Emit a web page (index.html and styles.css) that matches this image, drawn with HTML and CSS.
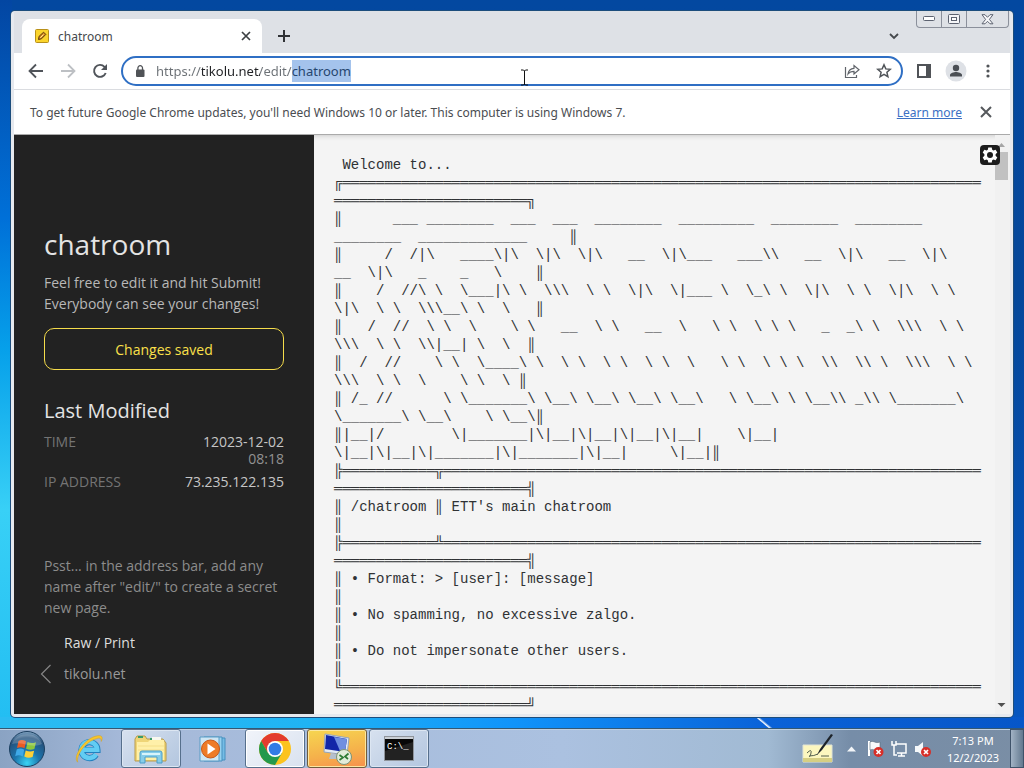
FILE: index.html
```html
<!DOCTYPE html>
<html lang="en">
<head>
<meta charset="utf-8">
<title>chatroom</title>
<link rel="stylesheet" href="styles.css">
</head>
<body>
<main class="desktop">
  <section class="window">
    <header class="tabstrip">
      <div class="tab">
        <svg class="favicon" width="14" height="14" viewBox="0 0 14 14"><rect x=".5" y=".5" width="13" height="13" rx="1" fill="#fbd42c" stroke="#b8901a"/><path d="M3.500 10.500l.6-3.200 4.500-4.100 2.200 2.200-4.300 4.400z" fill="#d9881c" stroke="#5a3a10"/><path d="M5.300 8.700l3.200-3.100" stroke="#fff0a0"/></svg>
        <span class="tab-title">chatroom</span>
        <button class="icon-button tab-close" aria-label="Close tab"><svg width="10" height="10" viewBox="0 0 10 10"><path d="M1 1l8 8M9 1l-8 8" stroke="#3c4043" stroke-width="1.700"/></svg></button>
      </div>
      <button class="icon-button new-tab" aria-label="New tab"><svg width="12" height="12" viewBox="0 0 12 12"><path d="M6 0v12M0 6h12" stroke="#303236" stroke-width="2"/></svg></button>
      <span class="grow"></span>
      <button class="icon-button tab-search" aria-label="Search tabs"><svg width="10" height="7" viewBox="0 0 10 7"><path d="M1 1l4 4 4-4" fill="none" stroke="#45484c" stroke-width="1.800"/></svg></button>
      <div class="caption">
        <button aria-label="Minimize"><svg width="12" height="6" viewBox="0 0 12 6"><rect x=".5" y=".5" width="11" height="4" rx="1" fill="#fff" stroke="#5c6270"/></svg></button>
        <button aria-label="Maximize"><svg width="12" height="11" viewBox="0 0 12 11"><rect x=".5" y=".5" width="11" height="9" rx="1" fill="#f4f5f8" stroke="#5c6270"/><rect x="3.500" y="3.500" width="5" height="3" fill="#fff" stroke="#5c6270"/></svg></button>
        <button class="caption-close" aria-label="Close"><svg width="13" height="11" viewBox="0 0 13 11"><path d="M1 .7h3l2.500 2.600L9 .7h3L8.400 5.400l3.600 4.400H9L6.500 7.300 4 9.800H1l3.600-4.400z" fill="#f8f8fa" stroke="#5c6270"/></svg></button>
      </div>
    </header>

    <nav class="toolbar">
      <button class="icon-button" aria-label="Back"><svg width="16" height="16" viewBox="0 0 16 16" fill="none" stroke="#50545a" stroke-width="1.800"><path d="M15 8H2M8 1.500L1.500 8 8 14.500"/></svg></button>
      <button class="icon-button" aria-label="Forward"><svg width="16" height="16" viewBox="0 0 16 16" fill="none" stroke="#bdc0c4" stroke-width="1.800"><path d="M1 8h13M8 1.500L14.500 8 8 14.500"/></svg></button>
      <button class="icon-button" aria-label="Reload"><svg width="16" height="16" viewBox="0 0 16 16"><path d="M13.700 10a6 6 0 1 1-1.200-6.200L14 5.500" fill="none" stroke="#50545a" stroke-width="1.900"/><path d="M15 1v6H9z" fill="#50545a"/></svg></button>
      <div class="omnibox">
        <svg width="10" height="13" viewBox="0 0 10 13"><rect x="1" y="4.500" width="8.500" height="7.500" rx="1" fill="#505357"/><path d="M2.900 5V3a2.300 2.300 0 0 1 4.600 0v2" fill="none" stroke="#505357" stroke-width="1.300"/></svg>
        <input class="url" type="text" aria-label="Address" value="https://tikolu.net/edit/chatroom" spellcheck="false">
        <button class="icon-button" aria-label="Share"><svg width="16" height="16" viewBox="0 0 16 16" fill="none" stroke="#60646a" stroke-width="1.200"><path d="M1.500 4v10.500h11V12"/><path d="M4 11c.5-4 3-5.500 6-5.700V2.500L15 6.700 10 11V8.300C7.500 8.300 5.500 9 4 11z"/></svg></button>
        <button class="icon-button" aria-label="Bookmark"><svg width="16" height="16" viewBox="0 0 16 16"><path d="M8 1.800l1.800 4.100 4.500.4-3.400 3 1 4.400L8 11.400l-3.900 2.300 1-4.400-3.400-3 4.500-.4z" fill="none" stroke="#505459" stroke-width="1.500"/></svg></button>
        <svg class="ibeam" width="9" height="17" viewBox="0 0 9 17"><path d="M1 1h2.500l1 1 1-1H8M4.500 2v14M1 16h2.500l1-1 1 1H8" fill="none" stroke="#111"/></svg>
      </div>
      <button class="icon-button" aria-label="Side panel"><svg width="14" height="14" viewBox="0 0 14 14"><rect x="1" y="1" width="12" height="12" fill="#fff" stroke="#505357" stroke-width="2"/><rect x="9" y="1" width="4" height="12" fill="#505357"/></svg></button>
      <button class="icon-button" aria-label="Profile"><svg width="22" height="22" viewBox="0 0 22 22"><circle cx="11" cy="11" r="10.500" fill="#dee1e6"/><circle cx="11" cy="8" r="3.200" fill="#4a4e54"/><path d="M5 16.500v-1.500c0-2 4-3 6-3s6 1 6 3v1.500z" fill="#4a4e54"/></svg></button>
      <button class="icon-button" aria-label="Menu"><svg width="4" height="14" viewBox="0 0 4 14" fill="#505357"><circle cx="2" cy="2" r="1.600"/><circle cx="2" cy="7" r="1.600"/><circle cx="2" cy="12" r="1.600"/></svg></button>
    </nav>

    <div class="infobar">
      <span class="infobar-text">To get future Google Chrome updates, you'll need Windows 10 or later. This computer is using Windows 7.</span>
      <a href="#learn">Learn more</a>
      <button class="icon-button infobar-close" aria-label="Dismiss"><svg width="12" height="12" viewBox="0 0 12 12"><path d="M1 1l10 10M11 1L1 11" stroke="#55585c" stroke-width="2"/></svg></button>
    </div>

    <div class="page">
      <aside class="sidebar">
        <h1>chatroom</h1>
        <p class="intro">Feel free to edit it and hit Submit!<br>Everybody can see your changes!</p>
        <button class="submit">Changes saved</button>
        <h2>Last Modified</h2>
        <dl class="meta">
          <dt>TIME</dt><dd>12023-12-02<span class="hour">08:18</span></dd>
          <dt>IP ADDRESS</dt><dd>73.235.122.135</dd>
        </dl>
        <p class="hint">Psst... in the address bar, add any name after "edit/" to create a secret new page.</p>
        <a class="raw" href="#raw">Raw / Print</a>
        <a class="home" href="#home"><svg width="12" height="20" viewBox="0 0 12 20"><path d="M10.500 1L1.500 10l9 9" fill="none" stroke="#858585" stroke-width="1.200"/></svg>tikolu.net</a>
      </aside>
      <div class="editor">
        <textarea class="note" aria-label="Note" wrap="off" spellcheck="false">
 Welcome to...
╔════════════════════════════════════════════════════════════════════════════
═══════════════════════╗
║      ___ ________  ___  ___  ________  _________  ________  ________
________  _____________     ║
║     /  /|\   ____\|\  \|\  \|\   __  \|\___   ___\\   __  \|\   __  \|\
__  \|\   _    _   \    ║
║    /  //\ \  \___|\ \  \\\  \ \  \|\  \|___ \  \_\ \  \|\  \ \  \|\  \ \
\|\  \ \  \\\__\ \  \   ║
║   /  //  \ \  \    \ \   __  \ \   __  \   \ \  \ \ \   _  _\ \  \\\  \ \
\\\  \ \  \\|__| \  \  ║
║  /  //    \ \  \____\ \  \ \  \ \  \ \  \   \ \  \ \ \  \\  \\ \  \\\  \ \
\\\  \ \  \    \ \  \ ║
║ /_ //      \ \_______\ \__\ \__\ \__\ \__\   \ \__\ \ \__\\ _\\ \_______\
\_______\ \__\    \ \__\║
║|__|/        \|_______|\|__|\|__|\|__|\|__|    \|__|
\|__|\|__|\|_______|\|_______|\|__|     \|__|║
╠═══════════╦════════════════════════════════════════════════════════════════
═══════════════════════╣
║ /chatroom ║ ETT's main chatroom
║
╠═══════════╩════════════════════════════════════════════════════════════════
═══════════════════════╣
║ • Format: &gt; [user]: [message]
║
║ • No spamming, no excessive zalgo.
║
║ • Do not impersonate other users.
║
╚════════════════════════════════════════════════════════════════════════════
═══════════════════════╝</textarea>
        <div class="scrollbar"><svg width="13" height="14" viewBox="0 0 13 14"><path d="M3 9l3.500-4L10 9z" fill="#a5a5a5"/></svg><span class="thumb"></span><span class="grow"></span><svg width="13" height="18" viewBox="0 0 13 18"><path d="M2.500 7h8l-4 4z" fill="#505050"/></svg></div>
        <button class="settings" aria-label="Settings"><svg width="20" height="20" viewBox="0 0 20 20"><rect width="20" height="20" rx="4" fill="#1c1c1c"/><path d="M8.300 2.500h3.400l.5 2.200 1.200.7 2.200-.7 1.700 2.900-1.700 1.600v1.600l1.700 1.600-1.700 2.900-2.200-.7-1.200.7-.5 2.200H8.300l-.5-2.200-1.200-.7-2.200.7-1.700-2.900 1.700-1.600V9.200L2.700 7.600l1.700-2.900 2.200.7 1.200-.7z" fill="#fff"/><circle cx="10" cy="10" r="3" fill="#1c1c1c"/></svg></button>
      </div>
    </div>
  </section>
</main>

<footer class="taskbar">
  <button class="start" aria-label="Start"><svg width="38" height="38" viewBox="0 0 38 38"><defs><radialGradient id="orb" cx=".5" cy=".9" r=".9"><stop offset="0" stop-color="#39d4f4"/><stop offset=".4" stop-color="#1b75ad"/><stop offset=".8" stop-color="#24517c"/><stop offset="1" stop-color="#87a9c6"/></radialGradient></defs><circle cx="19" cy="19" r="17.500" fill="url(#orb)" stroke="#1b3f60"/><path d="M10.500 11c2.500-1.500 5-1.200 7.500.3l-1.500 7c-2.500-1.500-5-1.500-7.500-.2z" fill="#ea5a23"/><path d="M19.500 12c3 1.500 5.500 1.400 8.500.2l-1.600 6.800c-3 1.200-5.500 1-8.300-.3z" fill="#8cc63e"/><path d="M8.700 19.500c2.500-1.300 5-1.200 7.500.3l-1.500 6.700c-2.500-1.500-5-1.500-7.500-.3z" fill="#3fa9e8"/><path d="M17.700 20.500c3 1.400 5.500 1.400 8.400.3L24.600 27c-3 1.200-5.500 1-8.300-.4z" fill="#fdd037"/><path d="M4 14C8 1 30 1 34 14 24 19 14 11 4 14z" fill="#fff" opacity=".2"/></svg></button>
  <button class="task" aria-label="Internet Explorer"><svg width="32" height="32" viewBox="0 0 34 34"><path d="M24.500 23A8.500 8.500 0 1 1 26 18H11" fill="none" stroke="#2180bf" stroke-width="6.500"/><path d="M24.500 22.500A8.500 8.500 0 1 1 25.800 17.800H11" fill="none" stroke="#62ccf3" stroke-width="4.800"/><path d="M5 31C-1 26 12 5 26 3c5-1 6 2 4 6 0-4-2-4-5-3C13 9 3 24 5 31z" fill="#f7c62e" stroke="#d59c18" stroke-width=".5"/></svg></button>
  <button class="task open" aria-label="Windows Explorer"><svg width="34" height="32" viewBox="0 0 34 32"><path d="M1 28V6l2-3h8l2 3h16l3 4v18z" fill="#efd577" stroke="#b99b4c"/><path d="M4 4h5M16 6h8" stroke="#3a9b68" stroke-width="2"/><path d="M18 4h9v4h-9z" fill="#f8f8f0"/><path d="M3 9h11l2-2h14v20H3z" fill="#fff0a9"/><path d="M4 13h26M4 17h26" stroke="#f4df8a"/><path d="M6 30V20q0-2 2-2h18q2 0 2 2v10h-5v-6H11v6z" fill="#86cde9" stroke="#4a9dc9"/><path d="M8 21h18" stroke="#d8f4fb" stroke-width="2"/></svg></button>
  <button class="task" aria-label="Media Player"><svg width="28" height="26" viewBox="0 0 28 26"><path d="M9 2h17v22H9z" fill="#75bce5" stroke="#4790bf"/><path d="M5 1h18v24H5z" fill="#98d2ef" stroke="#4790bf"/><path d="M1 1h19v24H1z" fill="#cee6f4" stroke="#5b9cc5"/><circle cx="11.500" cy="13" r="9" fill="#ee7b27" stroke="#c95716"/><path d="M8.500 7.500l8 5.500-8 5.500z" fill="#fff"/></svg></button>
  <button class="task active" aria-label="Chrome"><svg width="32" height="32" viewBox="0 0 32 32"><circle cx="16" cy="16" r="16" fill="#fcc31e"/><path d="M2.150 8A16 16 0 0 1 29.850 8H16L9.100 20z" fill="#e33b2e"/><path d="M2.150 8A16 16 0 0 0 16 32l6.900-12L9.100 20z" fill="#23994d"/><circle cx="16" cy="16" r="8" fill="#fff"/><circle cx="16" cy="16" r="6.300" fill="#327be5"/></svg></button>
  <button class="task alert" aria-label="Remote Desktop"><svg width="32" height="32" viewBox="0 0 32 32"><path d="M4 1l24 4-2 17-23-3z" fill="#e3ebf5" stroke="#93a4bc"/><path d="M5 2l21 4-2 13-20-3z" fill="#1226a8"/><path d="M13 4l13 2-2 13-5-1z" fill="#6f8fe0"/><path d="M10 20l9 2v4H8z" fill="#b5bfcc"/><circle cx="23" cy="24" r="7.500" fill="#e2ecd9" stroke="#7b9375"/><path d="M18.500 22l3.500 2.500-3.500 2.500M27.500 20.500L24 23.500l3 2.500" fill="none" stroke="#2f7b35" stroke-width="1.700"/></svg></button>
  <button class="task open" aria-label="Command Prompt"><svg width="30" height="25" viewBox="0 0 30 25"><rect x=".5" y=".5" width="29" height="24" fill="#080808" stroke="#8f949b"/><path d="M1 2h28" stroke="#cbd0d6" stroke-width="2"/><path d="M1 24V15L29 6v18z" fill="#222"/><text class="prompt" x="3" y="13">C:\_</text></svg></button>
  <span class="grow"></span>
  <div class="tray">
    <svg class="tablet" width="34" height="32" viewBox="0 0 34 32"><path d="M2 12h29v17H2z" fill="#fcf7bf" stroke="#e1e4d5"/><path d="M2 25h29v4H2z" fill="#d6cf83"/><path d="M6 20q5-5 4 0t-2 3q5 0 9-2M20 23h8" fill="none" stroke="#54604f"/><path d="M16 22l3-6L30 1l2 1-11 15z" fill="#1d2329"/></svg>
    <svg class="chevron" width="9" height="6" viewBox="0 0 9 6"><path d="M0 5.500L4.500.5 9 5.500z" fill="#f2f5f8"/></svg>
    <svg width="18" height="18" viewBox="0 0 18 18"><path d="M3 1v15" stroke="#fff" stroke-width="2"/><path d="M4 2c4-2 5 2 10 0v8c-5 2-6-2-10 0z" fill="#f8fafc" stroke="#596b7b" stroke-width=".6"/><circle cx="12.500" cy="12" r="5" fill="#d72e28"/><path d="M10.500 10l4 4M14.500 10l-4 4" stroke="#fff" stroke-width="1.700"/></svg>
    <svg width="18" height="18" viewBox="0 0 18 18" fill="none" stroke="#fff" stroke-width="1.500"><path d="M6 4h10v9H7M8 16h7M11.500 13v3"/><path d="M2 1v4h4V1M4 5v10h3"/></svg>
    <svg width="18" height="18" viewBox="0 0 18 18"><path d="M1 6h3l5-4v14l-5-4H1z" fill="#f5f8fa"/><circle cx="12" cy="12" r="5" fill="#d72e28"/><path d="M10 10l4 4M14 10l-4 4" stroke="#fff" stroke-width="1.700"/></svg>
  </div>
  <div class="clock"><time>7:13 PM</time><time>12/2/2023</time></div>
  <button class="show-desktop" aria-label="Show desktop"></button>
</footer>
<script src="script.js"></script>
</body>
</html>
```
FILE: styles.css
```css
* { box-sizing: border-box; }
body {
  margin: 0;
  height: 100vh;
  display: flex;
  flex-direction: column;
  overflow: hidden;
  font-family: "Noto Sans", "Open Sans", sans-serif;
  font-size: 12px;
}
button { padding: 0; border: 0; background: none; font: inherit; color: inherit; }
svg { display: block; flex: none; }
.grow { flex: 1; }

.desktop {
  flex: 1;
  min-height: 0;
  padding: 11px 11px 11px;
  background:
    linear-gradient(40deg, transparent 45%, #fff 50%, transparent 60%) 75% 100% / 20px 11px no-repeat,
    linear-gradient(90deg, #2bbcf2, #20b4f4 30%, #1094fa 50%, #0a62d8 75%, #0656c8) bottom / 100% 11px no-repeat,
    linear-gradient(#0346a2, #0070d8 30%, #06a0ea 48%, #38d0f6 70%, #22bdf2) left / 12px 100% no-repeat,
    linear-gradient(#0348a0, #04479a 40%, #0656c0);
}
.window {
  height: 100%;
  display: flex;
  flex-direction: column;
  padding: 0 3px 3px;
  background: #e6e9ee;
  border-radius: 4px;
  box-shadow: 0 0 0 1px #1c4d7c;
}

.tabstrip { display: flex; height: 42px; padding: 0 1px 0 8px; background: #dee1e6; }
.tab {
  width: 240px;
  margin-top: 8px;
  padding: 0 8px 0 13px;
  display: flex;
  align-items: center;
  background: #fff;
  border-radius: 8px 8px 0 0;
}
.tab-title { flex: 1; margin-left: 9px; color: #45494d; }
.icon-button { display: grid; place-items: center; width: 32px; height: 32px; flex: none; }
.tab-close { width: 16px; }
.new-tab { width: 24px; margin: 9px 0 0 10px; }
.tab-search { margin: 9px 6px 0 0; }
.caption {
  display: flex;
  height: 17px;
  border: 1px solid #8b909b;
  border-top: 0;
  border-radius: 0 0 4px 4px;
}
.caption button { width: 25px; display: grid; place-items: center; border-right: 1px solid #8b909b; }
.caption .caption-close { width: 41px; border: 0; }

.toolbar {
  display: flex;
  align-items: center;
  height: 37px;
  padding: 0 6px;
  background: #fff;
  border-bottom: 1px solid #dadce0;
}
.omnibox {
  position: relative;
  flex: 1;
  height: 30px;
  margin: 0 5px;
  padding: 0 1px 0 12px;
  display: flex;
  align-items: center;
  border: 2px solid #2f6fc4;
  border-radius: 15px;
}
.url {
  flex: 1;
  min-width: 0;
  height: 22px;
  margin-left: 11px;
  padding: 0;
  border: 0;
  outline: 0;
  font: 13px/22px "Noto Sans", "Open Sans", sans-serif;
  color: transparent;
  caret-color: transparent;
  background: linear-gradient(90deg, #6b7075 46px, #202124 46px 104px, #6b7075 104px 138px, #26466f 138px);
  background-clip: text;
}
.url::selection { background: #a4c3ec; color: #26466f; }
.ibeam { position: absolute; left: 397px; top: 11px; }

.infobar {
  display: flex;
  align-items: center;
  height: 45px;
  padding: 0 8px 0 16px;
  background: #fff;
  color: #4a4d51;
  border-bottom: 1px solid #aaa;
}
.infobar-text { flex: 1; }
.infobar a { color: #3c70c4; }
.infobar-close { margin-left: 8px; }

.page { flex: 1; min-height: 0; display: flex; background: #f4f4f4; }
.sidebar {
  width: 300px;
  padding: 88px 30px 0;
  display: flex;
  flex-direction: column;
  background: #222;
  color: #b8b8b8;
  font: 14px/21px "Open Sans", "Noto Sans", sans-serif;
  overflow: hidden;
}
.sidebar h1 { margin: 0; font-size: 28px; line-height: 42px; font-weight: 400; color: #e4e4e4; }
.sidebar p { margin: 0; }
.intro { padding-top: 7px; }
.submit {
  margin: 14px 0 25px;
  height: 42px;
  flex: none;
  border: 1px solid #f5dc4b;
  border-radius: 10px;
  color: #fbe04a;
}
.sidebar h2 { margin: 0; font-size: 20px; line-height: 32px; font-weight: 400; color: #e4e4e4; }
.meta { margin: 6px 0 0; display: grid; grid-template-columns: auto 1fr; row-gap: 6px; line-height: 17px; }
.meta dt { color: #747474; }
.meta dd { margin: 0; text-align: right; color: #c6c6c6; }
.hour { display: block; color: #929292; }
.sidebar .hint { margin-top: 65px; color: #8c8c8c; }
.sidebar a { text-decoration: none; }
.raw { margin: 14px 0 10px 20px; color: #dedede; }
.home { display: flex; align-items: center; gap: 12px; margin-left: -4px; color: #999; }

.editor { position: relative; flex: 1; min-width: 0; display: flex; box-shadow: inset 0 5px 5px -4px #ccc; }
.note {
  flex: 1;
  min-width: 0;
  padding: 21px 0 0 20px;
  border: 0;
  outline: 0;
  resize: none;
  overflow: hidden;
  background: transparent;
  color: #303234;
  font: 14px/18px "Liberation Mono", monospace;
}
.scrollbar { width: 15px; padding-top: 3px; display: flex; flex-direction: column; background: #f1f1f1; }
.thumb { width: 13px; height: 28px; background: #c1c1c1; }
.settings { position: absolute; right: 10px; top: 10px; }

.taskbar {
  height: 40px;
  display: flex;
  align-items: center;
  border-top: 1px solid #345873;
  background: linear-gradient(90deg, #8aa3c3, #a5b9d9 12%, #abc1e0 55%, #a1bad3 75%, #768da8 83%, #7a8ea5);
  box-shadow: inset 0 1px #bfd0e2;
}
.start { width: 38px; margin: 0 13px 0 8px; }
.task {
  width: 60px;
  height: 39px;
  margin-right: 2px;
  display: grid;
  place-items: center;
  border: 1px solid transparent;
  border-radius: 3px;
}
.task.open { border-color: #566f8c; background: linear-gradient(135deg, #d7e1ef, #b3c6df); box-shadow: inset 0 0 0 1px #dce6f2; }
.task.active { border-color: #566f8c; background: linear-gradient(135deg, #f1f4fa, #d9e2ef); box-shadow: inset 0 0 0 1px #fff; }
.task.alert { border-color: #705c3d; background: linear-gradient(170deg, #f6d650, #f5b14b 60%, #f7904d); box-shadow: inset 0 0 0 1px #fbe7a2; }
.prompt { font: 9px "Liberation Mono", monospace; fill: #fff; }
.tray { display: flex; align-items: center; gap: 6px; }
.tablet { margin-right: 6px; }
.chevron { margin-right: 4px; }
.clock {
  width: 74px;
  margin-left: 4px;
  display: flex;
  flex-direction: column;
  align-items: center;
  font-size: 11px;
  line-height: 17px;
  color: #fff;
}
.show-desktop { width: 14px; height: 39px; border: 1px solid #3f536a; background: linear-gradient(90deg, #a2b3c5, #63798f); }
```
FILE: script.js
```js
const url = document.querySelector(".url");
const start = url.value.lastIndexOf("/") + 1;
url.focus();
url.setSelectionRange(start, url.value.length);
```
